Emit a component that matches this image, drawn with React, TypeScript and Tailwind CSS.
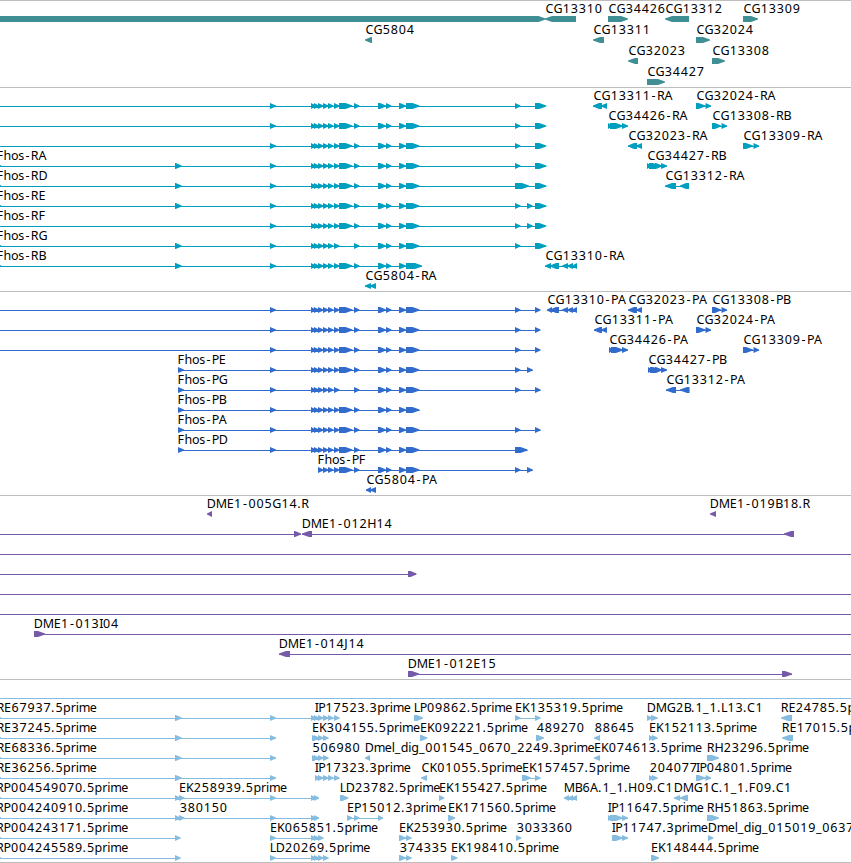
import type { ReactNode } from "react";

type Exon = [start: number, end: number];
type Feature = {
  y: number;
  label?: string;
  labelX?: number;
  line?: [number, number];
  exons?: Exon[];
  left?: boolean;
};

const WIDE = 851;

// Advance of each glyph in the label face, in pixels.
const ADVANCE: Record<string, number> = {
  A: 8, B: 7.3, C: 8, D: 9, E: 7, F: 7, G: 9, H: 9, I: 3.5, J: 4, K: 7.5, L: 6, M: 11, P: 7, R: 7.7,
  "-": 6.5, ".": 4, _: 6, p: 7.6, r: 5, i: 3, m: 11, e: 7, l: 3, d: 7.6, g: 7.6, h: 7.6, o: 7.3, s: 6,
};

function Label({ x, y, text }: { x: number; y: number; text: string }) {
  let pen = x + 0.4;
  const stops = Array.from(text).map((glyph) => {
    const nudge = glyph === "-" ? 1.2 : /\d/.test(glyph) ? 0.4 : 0;
    const at = pen + nudge;
    pen += ADVANCE[glyph] ?? 8;
    return at.toFixed(1);
  });
  return (
    <text x={stops.join(" ")} y={y} className="fill-black font-['Noto_Sans','DejaVu_Sans',sans-serif] text-[12.5px]">
      {text}
    </text>
  );
}

function arrow([a, b]: Exon, y: number, left?: boolean) {
  const head = Math.min(b - a, b - a > 9 ? 7 : 6);
  const neck = left ? a + head : b - head;
  return left
    ? `M${b} ${y - 3}H${neck}L${a} ${y - 0.5}V${y + 0.5}L${neck} ${y + 3}H${b}Z`
    : `M${a} ${y - 3}H${neck}L${b} ${y - 0.5}V${y + 0.5}L${neck} ${y + 3}H${a}Z`;
}

function Glyph({ f, rise = 6 }: { f: Feature; rise?: number }) {
  const exons = f.exons ?? [];
  const line = f.line ?? (exons.length > 1 ? [exons[0][0], exons[exons.length - 1][1]] : undefined);
  return (
    <g>
      {line && <rect x={line[0]} y={f.y} width={line[1] - line[0]} height={1} />}
      {exons.length > 0 && <path d={exons.map((e) => arrow(e, f.y, f.left)).join("")} />}
      {f.label && <Label x={f.labelX ?? exons[0][0]} y={f.y - rise} text={f.label} />}
    </g>
  );
}

function Track({ top, children, className }: { top: number; children: ReactNode; className: string }) {
  return (
    <section className={`flex shrink-0 overflow-hidden border-t border-[#bdbdbd] ${className}`}>
      <svg className="h-[203px] w-[851px] shrink-0" viewBox={`0 ${top} 851 203`} fill="currentColor">
        {children}
      </svg>
    </section>
  );
}

const small: Exon[] = [[311, 316], [314, 319], [318, 323.5], [323, 328.5], [328, 333.5], [334, 339.5]];
const middle: Exon[] = [[354, 359.5], [378, 386], [386, 391.5], [399, 406]];
const body: Exon[] = [...small, [339, 352.5], ...middle, [406, 419.5]];
const short: Exon[] = [...small, ...middle, [406, 419.5]];
const e175: Exon = [175, 181.7];
const e270: Exon = [270, 276];
const e515: Exon = [515, 520.5];
const e527: Exon = [527, 532.7];
const last: Exon = [535, 546.3];
const stop: Exon = [535, 540.5];
const edge: Exon = [-5, 1.2];

const genes: Feature[] = [
  { y: 19, exons: [[-10, 545.5]] },
  { y: 19, exons: [[545, 576]], label: "CG13310", left: true },
  { y: 19, exons: [[608, 628]], label: "CG34426" },
  { y: 19, exons: [[665, 689]], label: "CG13312", left: true },
  { y: 19, exons: [[743, 758]], label: "CG13309" },
  { y: 40, exons: [[365, 372]], label: "CG5804", left: true },
  { y: 40, exons: [[593, 604]], label: "CG13311", left: true },
  { y: 40, exons: [[696, 710]], label: "CG32024" },
  { y: 61, exons: [[628, 638]], label: "CG32023", left: true },
  { y: 61, exons: [[712, 725]], label: "CG13308" },
  { y: 82, exons: [[647, 665]], label: "CG34427" },
];

const transcripts: Feature[] = [
  { y: 106, line: [0, 545], exons: [e270, ...body, e515, last] },
  { y: 126, line: [0, 545], exons: [e270, ...body, e515, last] },
  { y: 146, line: [0, 545], exons: [e270, ...body, e515, last] },
  { y: 166, label: "Fhos-RA", labelX: -4, exons: [edge, e175, e270, ...body, e515, last] },
  { y: 186, label: "Fhos-RD", labelX: -4, exons: [edge, e175, e270, ...body, [515, 529], last] },
  { y: 206, label: "Fhos-RE", labelX: -4, exons: [edge, e175, e270, ...body, e515, e527, last] },
  { y: 226, label: "Fhos-RF", labelX: -4, line: [0, 545], exons: [e270, ...body, e515, e527, last] },
  { y: 246, label: "Fhos-RG", labelX: -4, exons: [edge, e175, e270, ...short, e515, last] },
  { y: 266, label: "Fhos-RB", labelX: -4, exons: [edge, e175, e270, ...body, [406, 422]] },
  { y: 286, label: "CG5804-RA", left: true, exons: [[365, 371], [370, 376]] },
  { y: 266, label: "CG13310-RA", left: true, exons: [[545, 551], [550, 559], [562, 568], [567, 573], [572, 577]] },
  { y: 106, label: "CG13311-RA", left: true, exons: [[593, 602], [601, 607]] },
  { y: 126, label: "CG34426-RA", exons: [[608, 612], [610, 623], [622, 628]] },
  { y: 146, label: "CG32023-RA", left: true, exons: [[628, 637], [636, 642]] },
  { y: 166, label: "CG34427-RB", exons: [[647, 651], [649, 660], [655, 662], [661, 667]] },
  { y: 186, label: "CG13312-RA", left: true, exons: [[665, 676], [680, 689]] },
  { y: 106, label: "CG32024-RA", exons: [[696, 705.5], [705.5, 711]] },
  { y: 126, label: "CG13308-RB", exons: [[712, 721], [721.5, 727]] },
  { y: 146, label: "CG13309-RA", exons: [[743, 753], [753.5, 759]] },
];

const proteins: Feature[] = [
  { y: 310, line: [0, 539], exons: [e270, ...body, e515, stop] },
  { y: 330, line: [0, 539], exons: [e270, ...body, e515, stop] },
  { y: 350, line: [0, 539], exons: [e270, ...body, e515, stop] },
  { y: 370, label: "Fhos-PE", labelX: 177, exons: [[178, 184], e270, ...body, e515, e527] },
  { y: 390, label: "Fhos-PG", labelX: 177, exons: [[178, 184], e270, ...short, e515, stop] },
  { y: 410, label: "Fhos-PB", labelX: 177, exons: [[178, 184], e270, ...body] },
  { y: 430, label: "Fhos-PA", labelX: 177, exons: [[178, 184], e270, ...body, e515, stop] },
  { y: 450, label: "Fhos-PD", labelX: 177, exons: [[178, 184], e270, ...body, [515, 527.5]] },
  { y: 470, label: "Fhos-PF", labelX: 317, exons: [...body.slice(2), e515, e527] },
  { y: 490, label: "CG5804-PA", left: true, exons: [[366, 371], [370, 376]] },
  { y: 310, label: "CG13310-PA", left: true, exons: [[547, 552], [550, 559], [562, 568], [567, 573], [572, 577]] },
  { y: 310, label: "CG32023-PA", left: true, exons: [[628, 637], [636, 642]] },
  { y: 310, label: "CG13308-PB", exons: [[712, 721], [721.5, 727]] },
  { y: 330, label: "CG13311-PA", left: true, exons: [[594, 602], [601, 607]] },
  { y: 330, label: "CG32024-PA", exons: [[696, 705.5], [705.5, 711]] },
  { y: 350, label: "CG34426-PA", exons: [[609, 613], [611, 623], [622, 628]] },
  { y: 350, label: "CG13309-PA", exons: [[743, 753], [753.5, 759]] },
  { y: 370, label: "CG34427-PB", exons: [[648, 652], [650, 660], [655, 662], [661, 667]] },
  { y: 390, label: "CG13312-PA", left: true, exons: [[666, 676], [680, 689.5]] },
];

const clones: Feature[] = [
  { y: 514, label: "DME1-005G14.R", labelX: 206.3, left: true, exons: [[207, 212]] },
  { y: 514, label: "DME1-019B18.R", labelX: 709.3, left: true, exons: [[710, 716]] },
  { y: 534, line: [0, 301], exons: [[294, 301]] },
  { y: 534, label: "DME1-012H14", labelX: 301.3, left: true, exons: [[302, 312], [784, 794]] },
  { y: 554, line: [0, WIDE] },
  { y: 574, line: [0, 416], exons: [[408, 416.5]] },
  { y: 594, line: [0, WIDE] },
  { y: 614, line: [0, WIDE] },
  { y: 634, label: "DME1-013I04", labelX: 33.3, line: [34, WIDE], exons: [[34, 45]] },
  { y: 654, label: "DME1-014J14", labelX: 278.3, left: true, line: [279, WIDE], exons: [[279, 290]] },
  { y: 674, label: "DME1-012E15", labelX: 407.3, exons: [[408, 419], [782, 792]] },
];

const trio: Exon[] = [[312, 317], [314, 319], [318, 323.5], [323, 328.5]];
const pair: Exon[] = [[649, 653.5], [652, 657.5]];
const e399: Exon[] = [[399, 406], [406, 411.5]];

const reads: Feature[] = [
  { y: 698, line: [0, WIDE] },
  { y: 718, label: "RE67937.5prime", labelX: -4, exons: [edge, e175, e270, ...small] },
  { y: 718, label: "IP17523.3prime", labelX: 314.3 },
  { y: 718, label: "LP09862.5prime", labelX: 413.3, exons: [[414, 423]] },
  { y: 718, label: "EK135319.5prime", labelX: 514.5, exons: [e515, stop] },
  { y: 718, label: "DMG2B.1_1.L13.C1", labelX: 646.3, exons: [[647, 652], [651, 657.5]] },
  { y: 718, label: "RE24785.5prime", labelX: 780.3, left: true, exons: [[781, 792]] },
  { y: 738, label: "RE37245.5prime", labelX: -4, exons: [edge, e175, e270] },
  { y: 738, label: "EK304155.5prime", labelX: 311.5, exons: trio },
  { y: 738, label: "EK092221.5prime", labelX: 419.5, exons: [[420, 427.3]] },
  { y: 738, label: "489270", exons: [[536, 544]] },
  { y: 738, label: "88645", left: true, exons: [[594, 600]] },
  { y: 738, label: "EK152113.5prime", labelX: 648.5, exons: pair },
  { y: 738, label: "RE17015.5prime", labelX: 781.3, left: true, exons: [[782, 793]] },
  { y: 758, label: "RE68336.5prime", labelX: -4, exons: [edge, e175, e270] },
  { y: 758, label: "506980", exons: trio, labelX: 311.6 },
  { y: 758, label: "Dmel_dig_001545_0670_2249.3prime", labelX: 364.3, left: true, exons: [[365, 370]] },
  { y: 758, label: "EK074613.5prime", labelX: 593.5, left: true, exons: [[594, 600]] },
  { y: 758, label: "RH23296.5prime", labelX: 706.3, exons: [[707, 719]] },
  { y: 778, label: "RE36256.5prime", labelX: -4, exons: [edge, e175, e270] },
  { y: 778, label: "IP17323.3prime", labelX: 314.3, exons: [[315, 320], ...small.slice(2)] },
  { y: 778, label: "CK01055.5prime", left: true, exons: [[421, 427]] },
  { y: 778, label: "EK157457.5prime", labelX: 521.5, exons: [[522, 531], stop] },
  { y: 778, label: "204077", exons: pair },
  { y: 778, label: "IP04801.5prime", labelX: 695.5, exons: [[696, 705.5], [705.5, 711]] },
  { y: 798, label: "RP004549070.5prime", labelX: -4.5, exons: [edge, [175, 180], [179, 184.5], e270, [311, 316], [314, 319]] },
  { y: 798, label: "EK258939.5prime", labelX: 178.5 },
  { y: 798, label: "LD23782.5prime", labelX: 339.3, exons: [[340, 348.5]] },
  { y: 798, label: "EK155427.5prime", labelX: 438.5, exons: [[439, 444.3]] },
  { y: 798, label: "MB6A.1_1.H09.C1", labelX: 563.3, left: true, exons: [[564, 569], [568, 573], [572, 577]] },
  { y: 798, label: "DMG1C.1_1.F09.C1", labelX: 673.3, left: true, exons: [[674, 680], [680, 688]] },
  { y: 818, label: "RP004240910.5prime", labelX: -4.5, exons: [edge, [175, 180], [179, 184.5], e270, [311, 316], [314, 319]] },
  { y: 818, label: "380150", labelX: 179 },
  { y: 818, label: "EP15012.3prime", labelX: 346.5, exons: [[347, 352.5], [354, 359.5], [378, 383]] },
  { y: 818, label: "EK171560.5prime", labelX: 447.5, exons: [[448, 455.3]] },
  { y: 818, label: "IP11647.5prime", labelX: 607.3, exons: [[608, 612], [610, 623], [622, 628]] },
  { y: 818, label: "RH51863.5prime", labelX: 706.3, exons: [[707, 719]] },
  { y: 838, label: "RP004243171.5prime", labelX: -4.5, exons: [edge, [175, 180.5]] },
  { y: 838, label: "EK065851.5prime", labelX: 269.5, exons: [e270, ...small.slice(0, 3)] },
  { y: 838, label: "EK253930.5prime", labelX: 398.5, exons: e399 },
  { y: 838, label: "3033360", exons: [[516, 521.3]] },
  { y: 838, label: "IP11747.3prime", labelX: 611.3, exons: [[612, 623], [622, 628]] },
  { y: 838, label: "Dmel_dig_015019_0637", labelX: 707.3, exons: [[708, 713.3]] },
  { y: 858, label: "RP004245589.5prime", labelX: -4.5, exons: [edge, [175, 180.5]] },
  { y: 858, label: "LD20269.5prime", labelX: 269.3, exons: [e270, ...small.slice(0, 4)] },
  { y: 858, label: "374335", exons: e399 },
  { y: 858, label: "EK198410.5prime", labelX: 450.5, exons: [[451, 457.5]] },
  { y: 858, label: "EK148444.5prime", labelX: 650.5, exons: [[651, 659]] },
];

const draw = (features: Feature[]) => features.map((f, i) => <Glyph key={i} f={f} />);

export default function App() {
  return (
    <main className="flex h-[863px] w-[851px] flex-col overflow-hidden border-b border-[#bdbdbd] bg-white">
      <Track top={1} className="h-[87px] text-[#3f8f95]">{draw(genes)}</Track>
      <Track top={88} className="h-[204px] text-[#009fc0]">{draw(transcripts)}</Track>
      <Track top={292} className="h-[204px] text-[#316ccd]">{draw(proteins)}</Track>
      <Track top={496} className="h-[184px] border-[#bdbdbd] text-[#7659a8]">{draw(clones)}</Track>
      <Track top={680} className="h-[183px] text-[#86bcdf]">{draw(reads)}</Track>
    </main>
  );
}
